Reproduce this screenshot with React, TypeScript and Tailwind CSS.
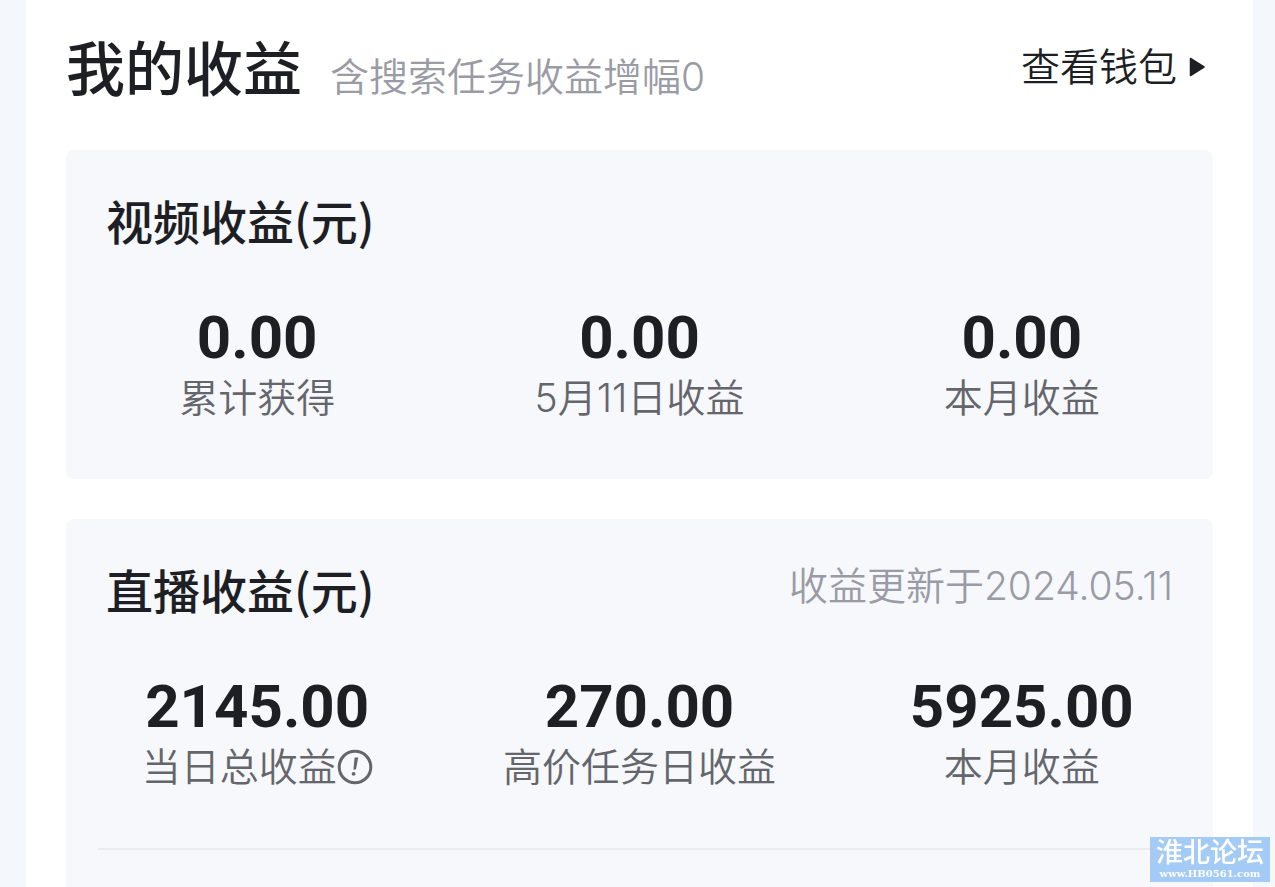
type Stat = {
  value: string;
  label: string;
  hint?: boolean;
};

type SectionProps = {
  title: string;
  note?: string;
  stats: Stat[];
};

const videoStats: Stat[] = [
  { value: "0.00", label: "累计获得" },
  { value: "0.00", label: "5月11日收益" },
  { value: "0.00", label: "本月收益" },
];

const liveStats: Stat[] = [
  { value: "2145.00", label: "当日总收益", hint: true },
  { value: "270.00", label: "高价任务日收益" },
  { value: "5925.00", label: "本月收益" },
];

function HintIcon() {
  return (
    <svg viewBox="0 0 36 36" className="size-9" fill="none" aria-hidden="true">
      <circle cx="18" cy="18" r="15.8" stroke="currentColor" strokeWidth="3" />
      <path d="M17.6 8.6h3.6l-2.2 12h-2.6z" fill="currentColor" />
      <circle cx="16.6" cy="24.8" r="1.9" fill="currentColor" />
    </svg>
  );
}

function StatItem({ value, label, hint }: Stat) {
  return (
    <li className="flex flex-col items-center">
      <span className="font-['Roboto',sans-serif] text-[60px] leading-[60px] font-bold text-[#1d1f24]">
        {value}
      </span>
      <span className="flex h-[60px] items-center text-[39px] leading-[60px] whitespace-nowrap text-[#65666c]">
        {label}
        {hint && (
          <button type="button" aria-label="收益说明">
            <HintIcon />
          </button>
        )}
      </span>
    </li>
  );
}

function SectionContent({ title, note, stats }: SectionProps) {
  return (
    <>
      <div className="flex items-start justify-between px-10">
        <h2 className="font-['Noto_Sans_CJK_SC',sans-serif] text-[47px] leading-[58px] font-medium text-[#1d1f24]">
          {title}
        </h2>
        {note && (
          <p className="text-[39px] leading-[52px] text-[#9b9ba6]">{note}</p>
        )}
      </div>
      <ul className="mt-[59px] grid grid-cols-3">
        {stats.map((stat, i) => (
          <StatItem key={i} {...stat} />
        ))}
      </ul>
    </>
  );
}

function Watermark() {
  return (
    <div className="fixed right-[5px] bottom-[5px] flex h-[45px] w-[120px] flex-col items-center bg-[#a3cbf6] text-white">
      <span className="text-[27px] leading-[31px] font-medium">淮北论坛</span>
      <span className="font-['DejaVu_Serif','Liberation_Serif',serif] text-[10px] leading-[12px] font-bold">
        www.HB0561.com
      </span>
    </div>
  );
}

export default function App() {
  return (
    <div className="flex min-h-screen bg-[#f4f8fc] pr-[22px] pl-[26px] font-['Inter','Noto_Sans_CJK_SC',sans-serif] font-[350]">
      <main className="flex flex-1 flex-col bg-white px-10 pt-8">
        <header className="flex items-start justify-between pr-2">
          <div className="flex items-baseline gap-7">
            <h1 className="text-[59px] leading-[76px] font-medium text-[#1d1f24]">
              我的收益
            </h1>
            <p className="text-[39px] text-[#9b9ba6]">含搜索任务收益增幅0</p>
          </div>
          <a
            href="#wallet"
            className="flex items-center gap-3 text-[39px] leading-[70px] text-[#1d1f24]"
          >
            查看钱包
            <svg viewBox="0 0 16 20" className="h-5 w-4" aria-hidden="true">
              <path
                d="M1.5 1.5v17L15 10z"
                fill="currentColor"
                stroke="currentColor"
                strokeWidth="1.5"
                strokeLinejoin="round"
              />
            </svg>
          </a>
        </header>

        <section className="mt-[42px] rounded-lg bg-[#f6f8fc] pt-[41px] pb-[51px]">
          <SectionContent title="视频收益(元)" stats={videoStats} />
        </section>

        <section className="mt-10 flex-1 rounded-t-lg bg-[#f6f8fc] pt-[41px]">
          <SectionContent
            title="直播收益(元)"
            note="收益更新于2024.05.11"
            stats={liveStats}
          />
          <hr className="mx-8 mt-[51px] border-t-2 border-[#ebecf0]" />
        </section>
      </main>
      <Watermark />
    </div>
  );
}
